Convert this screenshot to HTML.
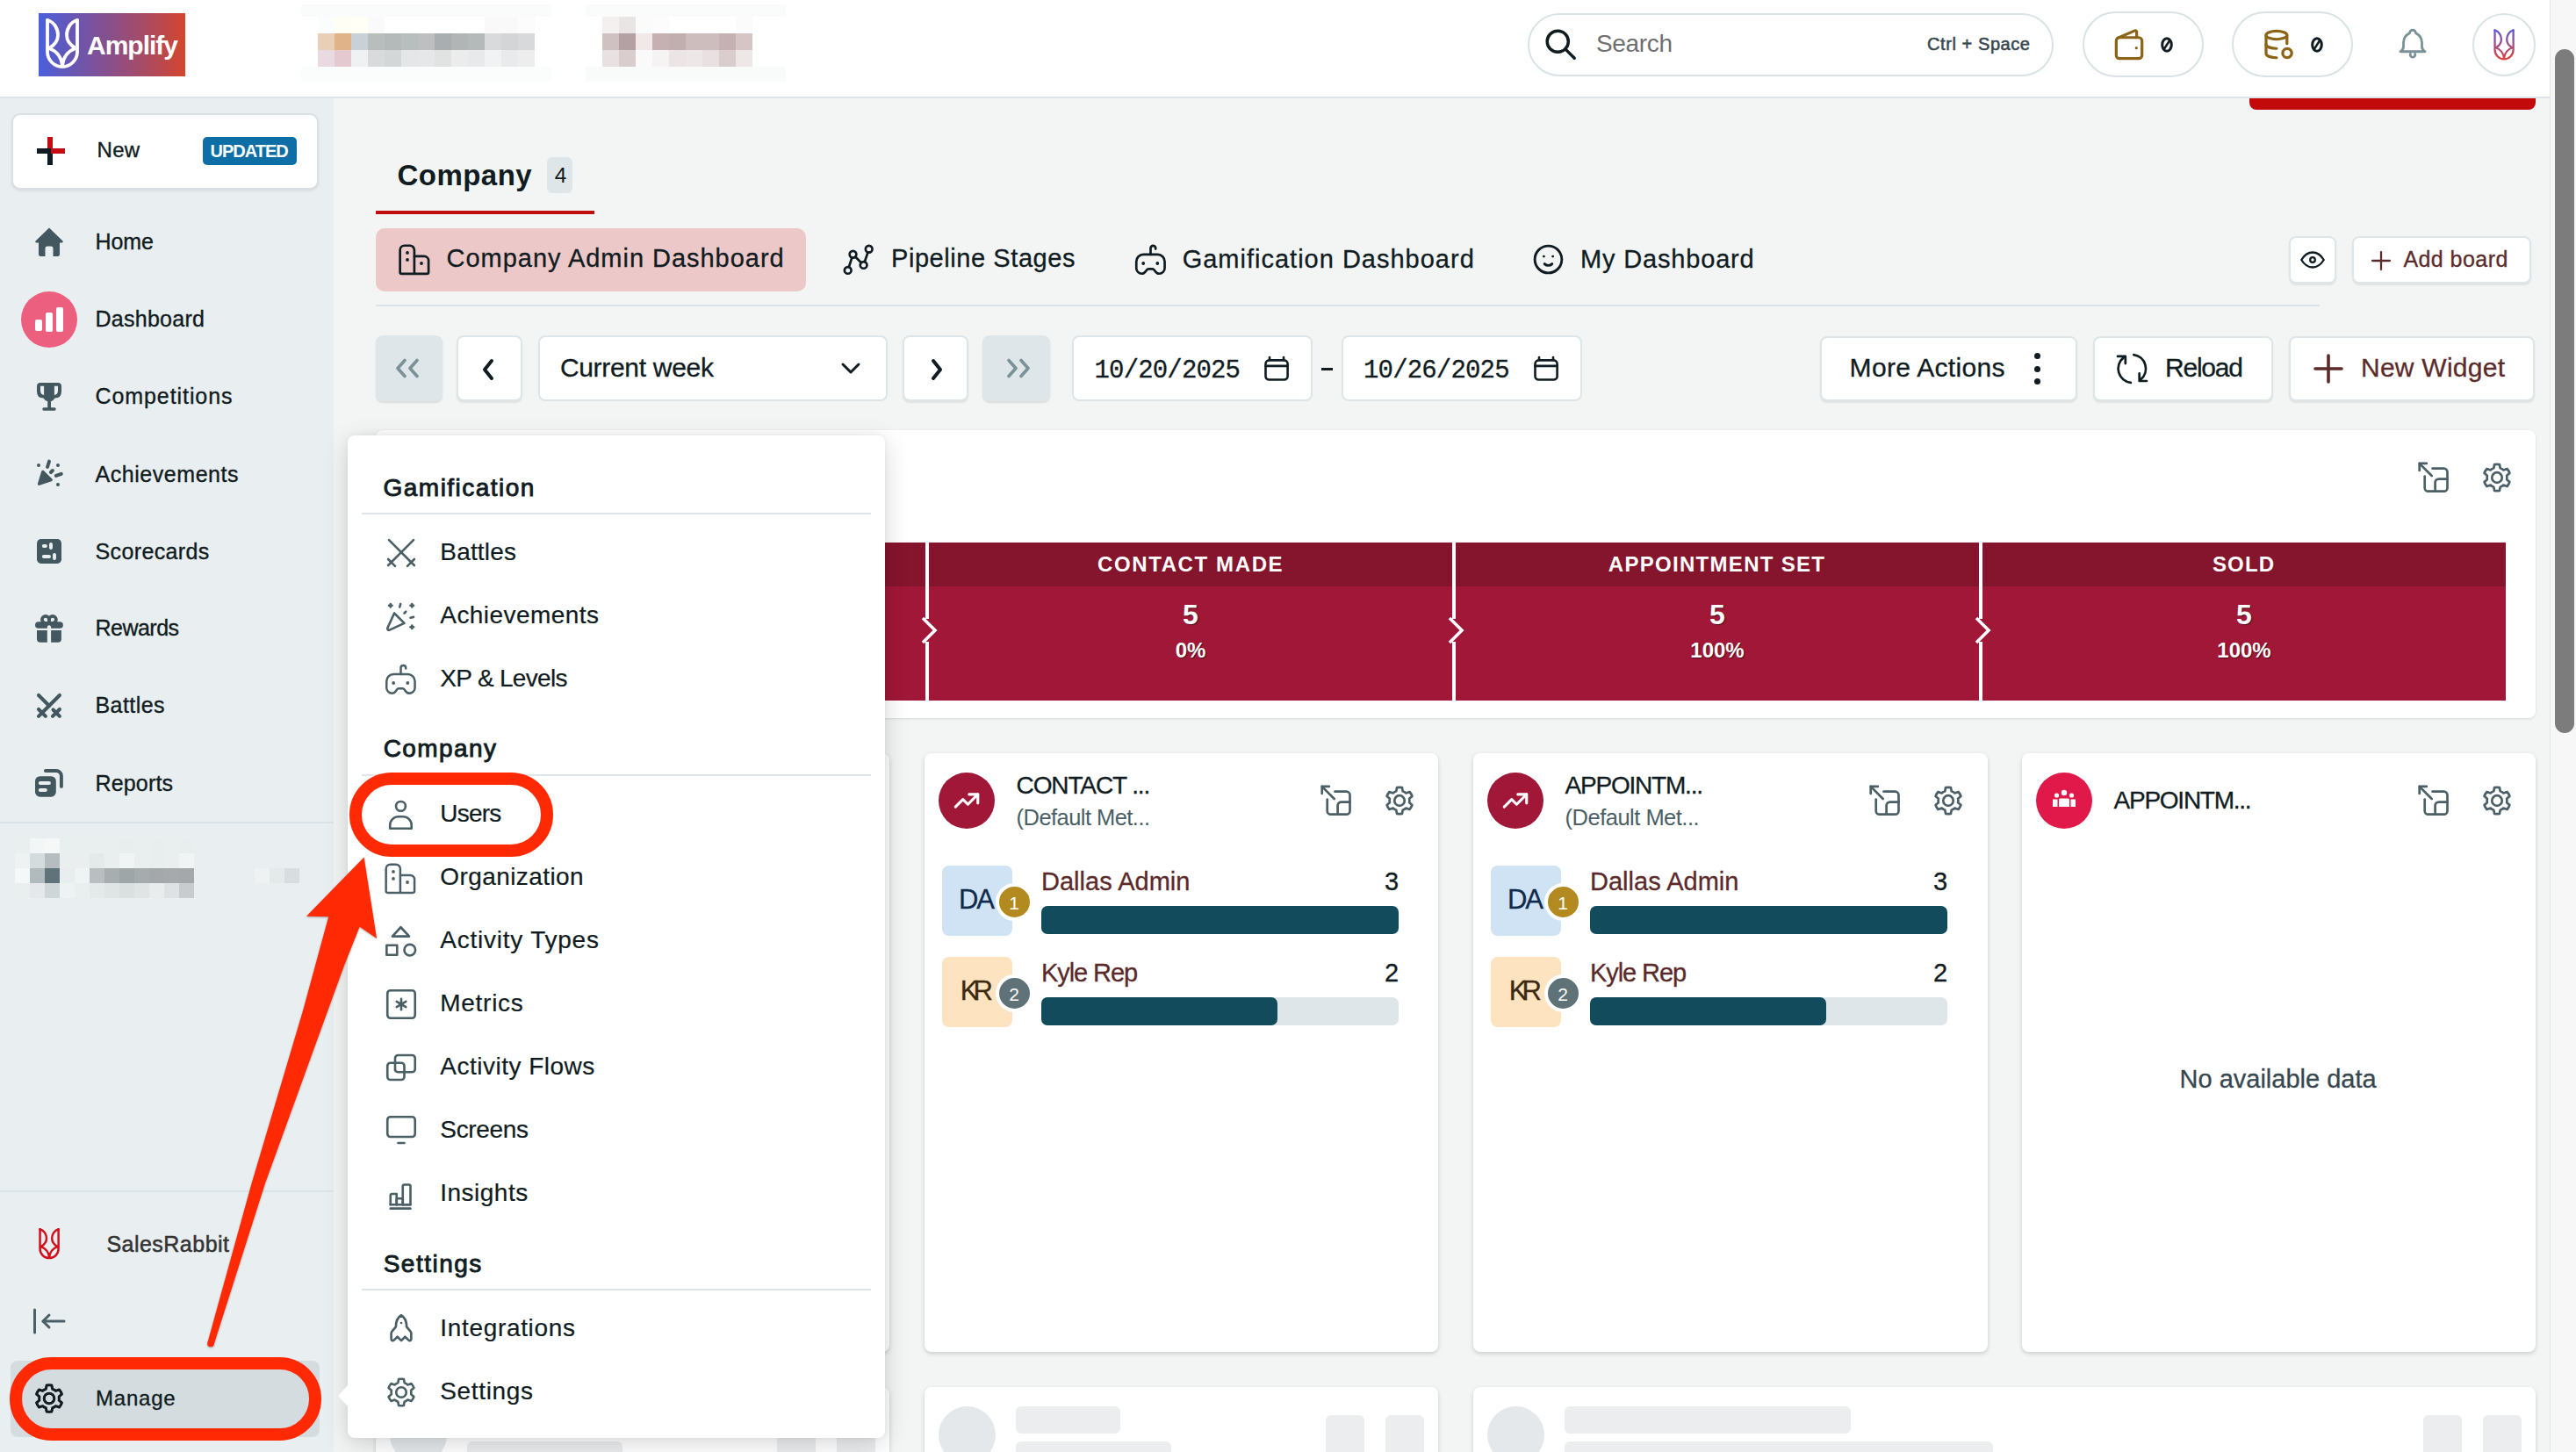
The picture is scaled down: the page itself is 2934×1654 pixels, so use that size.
<!DOCTYPE html><html><head><meta charset="utf-8"><style>
html,body{margin:0;padding:0;width:2934px;height:1654px;overflow:hidden;background:#f3f5f5;font-family:"Liberation Sans",sans-serif;}
.t{position:absolute;line-height:1;white-space:nowrap;}
.r{position:absolute;box-sizing:border-box;}
</style></head><body>
<div class="r" style="left:0px;top:0px;width:2904px;height:110px;background:#fff"></div>
<div class="r" style="left:0px;top:110px;width:2904px;height:2px;background:#dde5e8"></div>
<div class="r" style="left:44px;top:15px;width:167px;height:72px;background:linear-gradient(90deg,#4a5fdc 0%,#6a56b0 25%,#8a4f88 50%,#b04a5a 78%,#d4452c 100%)"></div>
<svg class="r" style="left:51px;top:20px;" width="40" height="62" viewBox="0 0 40 62"><g fill="none" stroke="#fff" stroke-width="3.8" stroke-linecap="round" stroke-linejoin="round" transform="translate(1,1)"><path d="M2 2 V38 A17 17 0 0 0 36 38 V2"/><path d="M2 2 C10 4 14 12 14 19 C14 26 9 31 4 34"/><path d="M36 2 C28 4 24 12 24 19 C24 26 29 31 34 34"/><path d="M4 34 C12 37 18 44 19 54"/><path d="M34 34 C26 37 20 44 19 54"/></g></svg>
<div class="t" style="left:99.0px;top:37.3px;font-size:30px;color:#fff;font-weight:700;letter-spacing:-1.00px;">Amplify</div>
<div class="r" style="left:362px;top:19px;width:19px;height:19px;background:#fbfcfc"></div>
<div class="r" style="left:381px;top:19px;width:19px;height:19px;background:#fffef5"></div>
<div class="r" style="left:400px;top:19px;width:19px;height:19px;background:#fffff5"></div>
<div class="r" style="left:419px;top:19px;width:19px;height:19px;background:#fafafa"></div>
<div class="r" style="left:438px;top:19px;width:19px;height:19px;background:#ffffff"></div>
<div class="r" style="left:457px;top:19px;width:19px;height:19px;background:#ffffff"></div>
<div class="r" style="left:476px;top:19px;width:19px;height:19px;background:#ffffff"></div>
<div class="r" style="left:495px;top:19px;width:19px;height:19px;background:#ffffff"></div>
<div class="r" style="left:514px;top:19px;width:19px;height:19px;background:#ffffff"></div>
<div class="r" style="left:533px;top:19px;width:19px;height:19px;background:#ffffff"></div>
<div class="r" style="left:552px;top:19px;width:19px;height:19px;background:#f8f9f8"></div>
<div class="r" style="left:571px;top:19px;width:19px;height:19px;background:#f9f9f9"></div>
<div class="r" style="left:590px;top:19px;width:19px;height:19px;background:#fcfcfc"></div>
<div class="r" style="left:362px;top:38px;width:19px;height:19px;background:#e8d0b8"></div>
<div class="r" style="left:381px;top:38px;width:19px;height:19px;background:#e0b488"></div>
<div class="r" style="left:400px;top:38px;width:19px;height:19px;background:#c8d0d8"></div>
<div class="r" style="left:419px;top:38px;width:19px;height:19px;background:#b9bdbc"></div>
<div class="r" style="left:438px;top:38px;width:19px;height:19px;background:#b4b9b9"></div>
<div class="r" style="left:457px;top:38px;width:19px;height:19px;background:#b8bdbe"></div>
<div class="r" style="left:476px;top:38px;width:19px;height:19px;background:#bdbfc1"></div>
<div class="r" style="left:495px;top:38px;width:19px;height:19px;background:#a9afb0"></div>
<div class="r" style="left:514px;top:38px;width:19px;height:19px;background:#b1b5b6"></div>
<div class="r" style="left:533px;top:38px;width:19px;height:19px;background:#b4b9ba"></div>
<div class="r" style="left:552px;top:38px;width:19px;height:19px;background:#d9dadb"></div>
<div class="r" style="left:571px;top:38px;width:19px;height:19px;background:#d3d5d7"></div>
<div class="r" style="left:590px;top:38px;width:19px;height:19px;background:#d8d9da"></div>
<div class="r" style="left:362px;top:57px;width:19px;height:19px;background:#e9d9e1"></div>
<div class="r" style="left:381px;top:57px;width:19px;height:19px;background:#e5c9d1"></div>
<div class="r" style="left:400px;top:57px;width:19px;height:19px;background:#f0f1f3"></div>
<div class="r" style="left:419px;top:57px;width:19px;height:19px;background:#d8dadc"></div>
<div class="r" style="left:438px;top:57px;width:19px;height:19px;background:#d4d7d8"></div>
<div class="r" style="left:457px;top:57px;width:19px;height:19px;background:#e4e6e8"></div>
<div class="r" style="left:476px;top:57px;width:19px;height:19px;background:#e5e7e8"></div>
<div class="r" style="left:495px;top:57px;width:19px;height:19px;background:#e0e3e1"></div>
<div class="r" style="left:514px;top:57px;width:19px;height:19px;background:#ececec"></div>
<div class="r" style="left:533px;top:57px;width:19px;height:19px;background:#e8e9ea"></div>
<div class="r" style="left:552px;top:57px;width:19px;height:19px;background:#f2f2f2"></div>
<div class="r" style="left:571px;top:57px;width:19px;height:19px;background:#e9eaeb"></div>
<div class="r" style="left:590px;top:57px;width:19px;height:19px;background:#ededed"></div>
<div class="r" style="left:686px;top:19px;width:19px;height:19px;background:#f4f0f0"></div>
<div class="r" style="left:705px;top:19px;width:19px;height:19px;background:#e9e5e5"></div>
<div class="r" style="left:724px;top:19px;width:19px;height:19px;background:#fbfbfb"></div>
<div class="r" style="left:743px;top:19px;width:19px;height:19px;background:#fcfcfc"></div>
<div class="r" style="left:762px;top:19px;width:19px;height:19px;background:#ffffff"></div>
<div class="r" style="left:781px;top:19px;width:19px;height:19px;background:#ffffff"></div>
<div class="r" style="left:800px;top:19px;width:19px;height:19px;background:#ffffff"></div>
<div class="r" style="left:819px;top:19px;width:19px;height:19px;background:#ffffff"></div>
<div class="r" style="left:838px;top:19px;width:19px;height:19px;background:#fbfbfb"></div>
<div class="r" style="left:343px;top:5px;width:285px;height:14px;background:#fafbfb"></div>
<div class="r" style="left:343px;top:76px;width:285px;height:17px;background:#fbfcfc"></div>
<div class="r" style="left:667px;top:5px;width:228px;height:14px;background:#fafbfb"></div>
<div class="r" style="left:667px;top:76px;width:228px;height:17px;background:#f9fafa"></div>
<div class="r" style="left:686px;top:38px;width:19px;height:19px;background:#cfc1c1"></div>
<div class="r" style="left:705px;top:38px;width:19px;height:19px;background:#b4a1a3"></div>
<div class="r" style="left:724px;top:38px;width:19px;height:19px;background:#f1e9e9"></div>
<div class="r" style="left:743px;top:38px;width:19px;height:19px;background:#c5b1b1"></div>
<div class="r" style="left:762px;top:38px;width:19px;height:19px;background:#c1afaf"></div>
<div class="r" style="left:781px;top:38px;width:19px;height:19px;background:#cdbdbd"></div>
<div class="r" style="left:800px;top:38px;width:19px;height:19px;background:#cdbdbd"></div>
<div class="r" style="left:819px;top:38px;width:19px;height:19px;background:#c5b1b3"></div>
<div class="r" style="left:838px;top:38px;width:19px;height:19px;background:#d5c5c5"></div>
<div class="r" style="left:686px;top:57px;width:19px;height:19px;background:#e9e1e1"></div>
<div class="r" style="left:705px;top:57px;width:19px;height:19px;background:#d9cdcd"></div>
<div class="r" style="left:724px;top:57px;width:19px;height:19px;background:#fafafa"></div>
<div class="r" style="left:743px;top:57px;width:19px;height:19px;background:#f5f3f3"></div>
<div class="r" style="left:762px;top:57px;width:19px;height:19px;background:#ede5e5"></div>
<div class="r" style="left:781px;top:57px;width:19px;height:19px;background:#ede7e7"></div>
<div class="r" style="left:800px;top:57px;width:19px;height:19px;background:#e9e1e1"></div>
<div class="r" style="left:819px;top:57px;width:19px;height:19px;background:#d9cdcd"></div>
<div class="r" style="left:838px;top:57px;width:19px;height:19px;background:#ede7e7"></div>
<div class="r" style="left:1740px;top:15px;width:599px;height:72px;background:#fff;border:2px solid #d9e3e6;border-radius:36px"></div>
<svg class="r" style="left:1756.5px;top:30.2px" width="41.4" height="41.4" viewBox="0 0 24 24" fill="none" stroke="#101c21" stroke-width="2" stroke-linecap="round" stroke-linejoin="round"><path d="M3 10a7 7 0 1 0 14 0a7 7 0 1 0 -14 0"/><path d="M21 21l-6 -6"/></svg>
<div class="t" style="left:1818.0px;top:36.2px;font-size:28px;color:#6f6f6f;letter-spacing:-0.35px;">Search</div>
<div class="t" style="left:2195.0px;top:40.0px;font-size:20px;color:#37474f;letter-spacing:0.58px;-webkit-text-stroke:0.55px #37474f;">Ctrl + Space</div>
<div class="r" style="left:2372px;top:13px;width:138px;height:75px;background:#fff;border:2px solid #d9e3e6;border-radius:38px"></div>
<svg class="r" style="left:2403px;top:28.5px" width="44" height="44" viewBox="0 0 24 24" fill="none" stroke="#8b6417" stroke-width="1.75" stroke-linecap="round" stroke-linejoin="round"><path d="M4 9.5a2 2 0 0 1 2 -2h12a2 2 0 0 1 2 2v9a2 2 0 0 1 -2 2h-12a2 2 0 0 1 -2 -2z"/><path d="M5 7.8l10.6 -4.6a0.8 0.8 0 0 1 1.1 .7v3.6"/><path d="M16.5 14l.01 0"/></svg>
<svg class="r" style="left:2461px;top:42px;" width="14" height="18" viewBox="0 0 14 18"><g fill="none" stroke="#101c21" stroke-width="3"><ellipse cx="7" cy="9" rx="5.3" ry="7.3"/><path d="M3.5 14.5 L10.5 3.5" stroke-width="2.4"/></g></svg>
<div class="r" style="left:2542px;top:13px;width:138px;height:75px;background:#fff;border:2px solid #d9e3e6;border-radius:38px"></div>
<svg class="r" style="left:2574px;top:29px" width="42" height="42" viewBox="0 0 24 24" fill="none" stroke="#8b6417" stroke-width="1.85" stroke-linecap="round" stroke-linejoin="round"><path d="M4 6.3a6.8 2.7 0 1 0 13.6 0a6.8 2.7 0 1 0 -13.6 0"/><path d="M4 6.3v12c0 1.5 3 2.7 6.8 2.7"/><path d="M4 12.3c0 1.5 3 2.7 6.8 2.7"/><path d="M17.6 6.3v5.5"/><path d="M14.8 18a2.95 2.95 0 1 0 5.9 0a2.95 2.95 0 1 0 -5.9 0"/></svg>
<svg class="r" style="left:2632px;top:42px;" width="14" height="18" viewBox="0 0 14 18"><g fill="none" stroke="#101c21" stroke-width="3"><ellipse cx="7" cy="9" rx="5.3" ry="7.3"/><path d="M3.5 14.5 L10.5 3.5" stroke-width="2.4"/></g></svg>
<svg class="r" style="left:2727px;top:29px" width="42" height="42" viewBox="0 0 24 24" fill="none" stroke="#7b9198" stroke-width="1.6" stroke-linecap="round" stroke-linejoin="round"><path d="M10 5a2 2 0 1 1 4 0a7 7 0 0 1 4 6v3a4 4 0 0 0 2 3h-16a4 4 0 0 0 2 -3v-3a7 7 0 0 1 4 -6"/><path d="M10.5 18.5a1.6 1.6 0 1 0 3 0"/></svg>
<div class="r" style="left:2816px;top:15px;width:72px;height:72px;background:#fff;border:2px solid #d9e3e6;border-radius:50%"></div>
<svg class="r" style="left:2839px;top:32px;" width="26" height="38" viewBox="0 0 26 38"><defs><linearGradient id="rg" gradientUnits="userSpaceOnUse" x1="0" y1="0" x2="0" y2="56"><stop offset="0" stop-color="#5b5bd6"/><stop offset="1" stop-color="#e0423a"/></linearGradient></defs><g fill="none" stroke="url(#rg)" stroke-width="3.7" stroke-linecap="round" stroke-linejoin="round" transform="translate(1.3,1.2) scale(0.62)"><path d="M2 2 V38 A17 17 0 0 0 36 38 V2"/><path d="M2 2 C10 4 14 12 14 19 C14 26 9 31 4 34"/><path d="M36 2 C28 4 24 12 24 19 C24 26 29 31 34 34"/><path d="M4 34 C12 37 18 44 19 54"/><path d="M34 34 C26 37 20 44 19 54"/></g></svg>
<div class="r" style="left:2904px;top:0px;width:30px;height:1654px;background:#f7f7f7;border-left:1px solid #e4e4e4"></div>
<div class="r" style="left:2910px;top:56px;width:22px;height:779px;background:#7b7c7b;border-radius:11px"></div>
<div class="r" style="left:2562px;top:112px;width:326px;height:13px;background:#c20a0a;border-radius:0 0 8px 8px"></div>
<div class="r" style="left:0px;top:112px;width:380px;height:1542px;background:#e9eef0"></div>
<div class="r" style="left:13px;top:129px;width:350px;height:87px;background:#fff;border:2px solid #d8e0e3;border-radius:10px;box-shadow:0 2px 3px rgba(0,0,0,.07)"></div>
<div class="r" style="left:54px;top:156px;width:6px;height:16px;background:#c40d12"></div>
<div class="r" style="left:54px;top:172px;width:6px;height:16px;background:#101c21"></div>
<div class="r" style="left:42px;top:169px;width:16px;height:6px;background:#101c21"></div>
<div class="r" style="left:58px;top:169px;width:16px;height:6px;background:#c40d12"></div>
<div class="t" style="left:110.6px;top:159.4px;font-size:24px;color:#101c21;letter-spacing:0.20px;-webkit-text-stroke:0.35px #101c21;">New</div>
<div class="r" style="left:231px;top:156px;width:107px;height:32px;background:#0e6fa6;border-radius:5px"></div>
<div class="t" style="left:239.5px;top:162.4px;font-size:20px;color:#fff;font-weight:700;letter-spacing:-1.00px;">UPDATED</div>
<div class="t" style="left:108.5px;top:262.8px;font-size:25px;color:#101c21;letter-spacing:-0.06px;-webkit-text-stroke:0.35px #101c21;">Home</div>
<div class="t" style="left:108.5px;top:350.8px;font-size:25px;color:#101c21;letter-spacing:0.27px;-webkit-text-stroke:0.35px #101c21;">Dashboard</div>
<div class="t" style="left:108.5px;top:439.2px;font-size:25px;color:#101c21;letter-spacing:0.92px;-webkit-text-stroke:0.35px #101c21;">Competitions</div>
<div class="t" style="left:108.5px;top:527.5px;font-size:25px;color:#101c21;letter-spacing:0.55px;-webkit-text-stroke:0.35px #101c21;">Achievements</div>
<div class="t" style="left:108.5px;top:615.8px;font-size:25px;color:#101c21;letter-spacing:0.37px;-webkit-text-stroke:0.35px #101c21;">Scorecards</div>
<div class="t" style="left:108.5px;top:702.8px;font-size:25px;color:#101c21;letter-spacing:-0.52px;-webkit-text-stroke:0.35px #101c21;">Rewards</div>
<div class="t" style="left:108.5px;top:791.2px;font-size:25px;color:#101c21;letter-spacing:0.44px;-webkit-text-stroke:0.35px #101c21;">Battles</div>
<div class="t" style="left:108.5px;top:879.8px;font-size:25px;color:#101c21;letter-spacing:0.16px;-webkit-text-stroke:0.35px #101c21;">Reports</div>
<div class="r" style="left:24px;top:332px;width:64px;height:64px;background:#ec5f7e;border-radius:50%"></div>
<div class="r" style="left:40px;top:363.6px;width:7.5px;height:13.899999999999977px;background:#fff;border-radius:2px"></div>
<div class="r" style="left:52px;top:355.5px;width:8px;height:22.0px;background:#fff;border-radius:2px"></div>
<div class="r" style="left:64px;top:350px;width:8px;height:27.5px;background:#fff;border-radius:2px"></div>
<svg class="r" style="left:40px;top:259px;" width="32" height="33" viewBox="0 0 32 33"><path fill="#43585e" d="M16 0.5 L31.5 15.5 Q32.3 17.2 30.5 17.5 L28 17.5 L28 30.5 Q28 33 25.5 33 L20.5 33 L20.5 24 Q20.5 21.5 18 21.5 L14 21.5 Q11.5 21.5 11.5 24 L11.5 33 L6.5 33 Q4 33 4 30.5 L4 17.5 L1.5 17.5 Q-0.3 17.2 0.5 15.5 Z"/></svg>
<svg class="r" style="left:34px;top:430px;" width="44" height="44" viewBox="0 0 44 44"><path fill="#43585e" fill-rule="evenodd" d="M12 6.1 H32 A4 4 0 0 1 36 10.1 V16 Q36 23.6 28.5 23.6 Q27 26.5 24 27.2 V34.2 H28 A1.75 1.75 0 0 1 28 37.7 H16 A1.75 1.75 0 0 1 16 34.2 H20.2 V27.2 Q17 26.5 15.5 23.6 Q8 23.6 8 16 V10.1 A4 4 0 0 1 12 6.1 Z M12 9.8 H16.1 V20 Q12 19.5 12 15 Z M32 9.8 H27.9 V20 Q32 19.5 32 15 Z"/></svg>
<svg class="r" style="left:34px;top:518px;" width="44" height="44" viewBox="0 0 44 44"><g fill="#43585e" stroke="#43585e" stroke-linecap="round" stroke-linejoin="round"><path d="M14.8 19.5 L24.2 28.6 L10.6 33.2 Z" stroke-width="3.4"/><circle cx="10" cy="12" r="2" stroke="none"/><circle cx="32" cy="12" r="2" stroke="none"/><circle cx="32" cy="33.9" r="2" stroke="none"/><path d="M22 7.6 L20 14" fill="none" stroke-width="3.9"/><path d="M25.9 18 L23.9 20" fill="none" stroke-width="3.9"/><path d="M29.8 23.9 L35.8 21.8" fill="none" stroke-width="3.9"/></g></svg>
<svg class="r" style="left:34px;top:606px;" width="44" height="44" viewBox="0 0 44 44"><rect x="8" y="8" width="28" height="28" rx="4.8" fill="#43585e"/><g stroke="#e9eef0" stroke-width="3.9" stroke-linecap="round"><path d="M15.8 16 H17.9"/><path d="M24 14 V18"/><path d="M15.8 28 H22"/><path d="M28 25.9 V30"/></g></svg>
<svg class="r" style="left:34px;top:694px;" width="44" height="44" viewBox="0 0 44 44"><g fill="#43585e"><path d="M9.8 14.2 H34.1 A3.8 3.8 0 0 1 34.1 21.8 H24.1 V20.4 A2.15 2.15 0 0 0 19.8 20.4 V21.8 H9.8 A3.8 3.8 0 0 1 9.8 14.2 Z"/><path d="M8 24.1 H19.8 V37.7 H12 A4 4 0 0 1 8 33.7 Z"/><path d="M24.1 24.1 H35.9 V33.7 A4 4 0 0 1 31.9 37.7 H24.1 Z"/></g><g fill="none" stroke="#43585e" stroke-width="3.7"><path d="M21.9 15 V11.8 A4 4 0 1 0 17.9 15.8 H21.9"/><path d="M21.9 15 V11.8 A4 4 0 1 1 25.9 15.8 H21.9"/></g></svg>
<svg class="r" style="left:34px;top:782px;" width="44" height="44" viewBox="0 0 44 44"><g stroke="#43585e" stroke-width="4.1" stroke-linecap="round" fill="none"><path d="M10 10 L22 22"/><path d="M33.9 10 L13.9 30"/><path d="M10 26 L17.9 33.9"/><path d="M10 33.9 L13.9 30"/><path d="M26.5 26.5 L33.9 33.9"/><path d="M33.9 26 L26 33.9"/></g></svg>
<svg class="r" style="left:34px;top:870px;" width="44" height="44" viewBox="0 0 44 44"><rect x="6" y="14.2" width="23.8" height="23.5" rx="5.5" fill="#43585e"/><g stroke="#e9eef0" stroke-width="4" stroke-linecap="round"><path d="M11.8 22 H21.9"/><path d="M11.8 30 H17.8"/></g><path d="M17.9 8 H29.8 A6 6 0 0 1 35.9 14 V25.9" fill="none" stroke="#43585e" stroke-width="3.9" stroke-linecap="round"/></svg>
<div class="r" style="left:0px;top:936px;width:380px;height:2px;background:#d9e3e8"></div>
<div class="r" style="left:17px;top:955px;width:17px;height:17px;background:#e9eeee"></div>
<div class="r" style="left:34px;top:955px;width:17px;height:17px;background:#f2f6f6"></div>
<div class="r" style="left:51px;top:955px;width:17px;height:17px;background:#f6f8f8"></div>
<div class="r" style="left:68px;top:955px;width:17px;height:17px;background:#e9eeee"></div>
<div class="r" style="left:85px;top:955px;width:17px;height:17px;background:#e9eeee"></div>
<div class="r" style="left:102px;top:955px;width:17px;height:17px;background:#e9efef"></div>
<div class="r" style="left:119px;top:955px;width:17px;height:17px;background:#e9efef"></div>
<div class="r" style="left:136px;top:955px;width:17px;height:17px;background:#e8eeee"></div>
<div class="r" style="left:153px;top:955px;width:17px;height:17px;background:#e9eeee"></div>
<div class="r" style="left:170px;top:955px;width:17px;height:17px;background:#e8eeee"></div>
<div class="r" style="left:187px;top:955px;width:17px;height:17px;background:#e9eeee"></div>
<div class="r" style="left:204px;top:955px;width:17px;height:17px;background:#e8eeee"></div>
<div class="r" style="left:17px;top:972px;width:17px;height:17px;background:#eef2f2"></div>
<div class="r" style="left:34px;top:972px;width:17px;height:17px;background:#d4dcde"></div>
<div class="r" style="left:51px;top:972px;width:17px;height:17px;background:#b5bdc0"></div>
<div class="r" style="left:68px;top:972px;width:17px;height:17px;background:#eaeeee"></div>
<div class="r" style="left:85px;top:972px;width:17px;height:17px;background:#eaeeee"></div>
<div class="r" style="left:102px;top:972px;width:17px;height:17px;background:#e4eaea"></div>
<div class="r" style="left:119px;top:972px;width:17px;height:17px;background:#eaeeee"></div>
<div class="r" style="left:136px;top:972px;width:17px;height:17px;background:#f0f4f4"></div>
<div class="r" style="left:153px;top:972px;width:17px;height:17px;background:#eaeeee"></div>
<div class="r" style="left:170px;top:972px;width:17px;height:17px;background:#e8eeee"></div>
<div class="r" style="left:187px;top:972px;width:17px;height:17px;background:#eaeeee"></div>
<div class="r" style="left:204px;top:972px;width:17px;height:17px;background:#f0f4f4"></div>
<div class="r" style="left:17px;top:989px;width:17px;height:17px;background:#f4f8f8"></div>
<div class="r" style="left:34px;top:989px;width:17px;height:17px;background:#b1bbbe"></div>
<div class="r" style="left:51px;top:989px;width:17px;height:17px;background:#5f7378"></div>
<div class="r" style="left:68px;top:989px;width:17px;height:17px;background:#e8eeee"></div>
<div class="r" style="left:85px;top:989px;width:17px;height:17px;background:#eef4f4"></div>
<div class="r" style="left:102px;top:989px;width:17px;height:17px;background:#babec0"></div>
<div class="r" style="left:119px;top:989px;width:17px;height:17px;background:#a8aeb0"></div>
<div class="r" style="left:136px;top:989px;width:17px;height:17px;background:#9fa6a8"></div>
<div class="r" style="left:153px;top:989px;width:17px;height:17px;background:#a6acae"></div>
<div class="r" style="left:170px;top:989px;width:17px;height:17px;background:#a4a8aa"></div>
<div class="r" style="left:187px;top:989px;width:17px;height:17px;background:#a6aaac"></div>
<div class="r" style="left:204px;top:989px;width:17px;height:17px;background:#a4a8aa"></div>
<div class="r" style="left:17px;top:1006px;width:17px;height:17px;background:#e9eeee"></div>
<div class="r" style="left:34px;top:1006px;width:17px;height:17px;background:#e4e8ea"></div>
<div class="r" style="left:51px;top:1006px;width:17px;height:17px;background:#cfd6d8"></div>
<div class="r" style="left:68px;top:1006px;width:17px;height:17px;background:#eef2f2"></div>
<div class="r" style="left:85px;top:1006px;width:17px;height:17px;background:#e9eeee"></div>
<div class="r" style="left:102px;top:1006px;width:17px;height:17px;background:#e4eaea"></div>
<div class="r" style="left:119px;top:1006px;width:17px;height:17px;background:#dfe4e4"></div>
<div class="r" style="left:136px;top:1006px;width:17px;height:17px;background:#dadfe0"></div>
<div class="r" style="left:153px;top:1006px;width:17px;height:17px;background:#e0e4e4"></div>
<div class="r" style="left:170px;top:1006px;width:17px;height:17px;background:#e8ecec"></div>
<div class="r" style="left:187px;top:1006px;width:17px;height:17px;background:#dee2e2"></div>
<div class="r" style="left:204px;top:1006px;width:17px;height:17px;background:#c8ccce"></div>
<div class="r" style="left:290px;top:989px;width:17px;height:17px;background:#eef2f2"></div>
<div class="r" style="left:307px;top:989px;width:17px;height:17px;background:#e4eaea"></div>
<div class="r" style="left:324px;top:989px;width:17px;height:17px;background:#d8dee0"></div>
<div class="r" style="left:0px;top:1356px;width:380px;height:2px;background:#d9e3e8"></div>
<svg class="r" style="left:43px;top:1398px;" width="26" height="39" viewBox="0 0 26 39"><g fill="none" stroke="#d0101b" stroke-width="4" stroke-linecap="round" stroke-linejoin="round" transform="translate(1.3,1) scale(0.62)"><path d="M2 2 V38 A17 17 0 0 0 36 38 V2"/><path d="M2 2 C10 4 14 12 14 19 C14 26 9 31 4 34"/><path d="M36 2 C28 4 24 12 24 19 C24 26 29 31 34 34"/><path d="M4 34 C12 37 18 44 19 54"/><path d="M34 34 C26 37 20 44 19 54"/></g></svg>
<div class="t" style="left:121.4px;top:1404.8px;font-size:25px;color:#333;letter-spacing:0.48px;-webkit-text-stroke:0.5px #333;">SalesRabbit</div>
<svg class="r" style="left:37px;top:1490px;" width="40" height="30" viewBox="0 0 40 30"><g stroke="#4b5f66" stroke-width="3" stroke-linecap="round" stroke-linejoin="round" fill="none"><path d="M2.5 2 V28"/><path d="M12 15 H36"/><path d="M19 8 L12 15 L19 22"/></g></svg>
<div class="r" style="left:12px;top:1550px;width:352px;height:87px;background:#d5dcdf;border-radius:8px"></div>
<svg class="r" style="left:35px;top:1572px" width="42" height="42" viewBox="0 0 24 24" fill="none" stroke="#101c21" stroke-width="1.75" stroke-linecap="round" stroke-linejoin="round"><path d="M10.34 3.46A8.7 8.7 0 0 1 13.66 3.46L14.12 5.85A6.5 6.5 0 0 1 16.26 7.09L18.57 6.29A8.7 8.7 0 0 1 20.23 9.17L18.38 10.76A6.5 6.5 0 0 1 18.38 13.24L20.23 14.83A8.7 8.7 0 0 1 18.57 17.71L16.26 16.91A6.5 6.5 0 0 1 14.12 18.15L13.66 20.54A8.7 8.7 0 0 1 10.34 20.54L9.88 18.15A6.5 6.5 0 0 1 7.74 16.91L5.43 17.71A8.7 8.7 0 0 1 3.77 14.83L5.62 13.24A6.5 6.5 0 0 1 5.62 10.76L3.77 9.17A8.7 8.7 0 0 1 5.43 6.29L7.74 7.09A6.5 6.5 0 0 1 9.88 5.85Z"/><path d="M12 12m-3.3 0a3.3 3.3 0 1 0 6.6 0a3.3 3.3 0 1 0 -6.6 0"/></svg>
<div class="t" style="left:109.0px;top:1580.6px;font-size:24px;color:#101c21;letter-spacing:0.78px;-webkit-text-stroke:0.35px #101c21;">Manage</div>
<div class="t" style="left:452.5px;top:182.9px;font-size:33px;color:#101c21;font-weight:700;letter-spacing:0.47px;">Company</div>
<div class="r" style="left:623px;top:179px;width:29px;height:41px;background:#dfe6ea;border-radius:6px"></div>
<div class="t" style="left:631.8px;top:187.8px;font-size:24.5px;color:#101c21;">4</div>
<div class="r" style="left:428px;top:240px;width:249px;height:4px;background:#c00d0d"></div>
<div class="r" style="left:428px;top:260px;width:490px;height:72px;background:#ecc8c8;border-radius:10px"></div>
<svg class="r" style="left:445px;top:270px;" width="55" height="50" viewBox="0 0 55 50"><g fill="none" stroke="#101c21" stroke-width="2.7" stroke-linejoin="round"><path d="M12.5 41.9 H41.2 A1.9 1.9 0 0 0 43.1 40 V26.9 A5 5 0 0 0 38.1 21.9 H26.9 V14.75 A5 5 0 0 0 21.9 9.75 H15.65 A5 5 0 0 0 10.65 14.75 V40 A1.9 1.9 0 0 0 12.5 41.9 Z"/><path d="M26.9 21.9 V41.9"/></g><g fill="#101c21"><circle cx="19" cy="17.9" r="1.9"/><circle cx="19" cy="25.9" r="1.9"/><circle cx="35" cy="30" r="1.9"/></g></svg>
<div class="t" style="left:508.6px;top:280.4px;font-size:29px;color:#101c21;letter-spacing:0.97px;-webkit-text-stroke:0.3px #101c21;">Company Admin Dashboard</div>
<svg class="r" style="left:950px;top:270px;" width="55" height="50" viewBox="0 0 55 50"><g fill="none" stroke="#101c21" stroke-width="2.7" stroke-linecap="round"><circle cx="15.7" cy="37.9" r="3.85"/><circle cx="21.5" cy="19.8" r="3.85"/><circle cx="33.6" cy="31.9" r="3.85"/><circle cx="39.7" cy="13.8" r="3.85"/><path d="M16.87 34.23 L20.33 23.47 M24.22 22.52 L30.88 29.18 M34.83 28.25 L38.47 17.45"/></g></svg>
<div class="t" style="left:1015.0px;top:280.2px;font-size:29px;color:#101c21;letter-spacing:0.57px;-webkit-text-stroke:0.3px #101c21;">Pipeline Stages</div>
<svg class="r" style="left:1285px;top:270px;" width="55" height="50" viewBox="0 0 55 50"><g fill="none" stroke="#101c21" stroke-width="2.7" stroke-linecap="round" stroke-linejoin="round"><path d="M17.25 19.95 H33.55 A8 8 0 0 1 41.55 27.95 V35.5 A6.25 6.25 0 0 1 35.3 41.75 C33 41.75 31.7 40.5 30.5 38.7 L29.6 37.4 A2.5 2.5 0 0 0 27.5 36.3 H23.2 A2.5 2.5 0 0 0 21.1 37.4 L20.2 38.7 C19 40.5 17.7 41.75 15.5 41.75 A6.25 6.25 0 0 1 9.25 35.5 V27.95 A8 8 0 0 1 17.25 19.95 Z"/><path d="M25.5 19.95 V12.8 A2.85 2.85 0 0 1 31.2 12.8 V13.6"/></g><g fill="#101c21"><circle cx="17.2" cy="30" r="1.9"/><circle cx="33.3" cy="30" r="1.9"/></g></svg>
<div class="t" style="left:1346.7px;top:280.7px;font-size:29px;color:#101c21;letter-spacing:1.00px;-webkit-text-stroke:0.3px #101c21;">Gamification Dashboard</div>
<svg class="r" style="left:1743px;top:275px" width="41" height="41" viewBox="0 0 24 24" fill="none" stroke="#101c21" stroke-width="1.7" stroke-linecap="round" stroke-linejoin="round"><path d="M12 12m-9 0a9 9 0 1 0 18 0a9 9 0 1 0 -18 0"/><path d="M9 10l.01 0"/><path d="M15 10l.01 0"/><path d="M9.5 15a3.5 3.5 0 0 0 5 0"/></svg>
<div class="t" style="left:1800.0px;top:280.7px;font-size:29px;color:#101c21;letter-spacing:0.83px;-webkit-text-stroke:0.3px #101c21;">My Dashboard</div>
<div class="r" style="left:2607px;top:269px;width:54px;height:54px;background:#fff;border:2px solid #dde5e8;border-radius:8px;box-shadow:0 2px 2px rgba(0,0,0,.08)"></div>
<svg class="r" style="left:2617px;top:279px" width="34" height="34" viewBox="0 0 24 24" fill="none" stroke="#101c21" stroke-width="1.6" stroke-linecap="round" stroke-linejoin="round"><path d="M10 12a2 2 0 1 0 4 0a2 2 0 0 0 -4 0"/><path d="M21 12c-2.4 4 -5.4 6 -9 6c-3.6 0 -6.6 -2 -9 -6c2.4 -4 5.4 -6 9 -6c3.6 0 6.6 2 9 6"/></svg>
<div class="r" style="left:2679px;top:269px;width:204px;height:54px;background:#fff;border:2px solid #dde5e8;border-radius:8px;box-shadow:0 2px 2px rgba(0,0,0,.08)"></div>
<svg class="r" style="left:2694.5px;top:279.5px" width="34" height="34" viewBox="0 0 24 24" fill="none" stroke="#5b2b2b" stroke-width="1.6" stroke-linecap="round" stroke-linejoin="round"><path d="M12 5l0 14"/><path d="M5 12l14 0"/></svg>
<div class="t" style="left:2737.4px;top:282.9px;font-size:25px;color:#5b2b2b;letter-spacing:0.45px;-webkit-text-stroke:0.3px #5b2b2b;">Add board</div>
<div class="r" style="left:428px;top:347px;width:2214px;height:2px;background:#dce4e8"></div>
<div class="r" style="left:428px;top:382px;width:76px;height:75px;background:#dfe6e9;border-radius:8px;box-shadow:0 2px 2px rgba(0,0,0,.1)"></div>
<svg class="r" style="left:449px;top:408px;" width="32" height="24" viewBox="0 0 32 24"><g fill="none" stroke="#7b9198" stroke-width="3.6" stroke-linecap="round" stroke-linejoin="round"><path d="M12 2.5 L4 11.5 L12 20.5"/><path d="M26 2.5 L18 11.5 L26 20.5"/></g></svg>
<div class="r" style="left:520px;top:382px;width:75px;height:75px;background:#fff;border:2px solid #dde5e8;border-radius:8px;box-shadow:0 2px 2px rgba(0,0,0,.08)"></div>
<svg class="r" style="left:546px;top:408px;" width="20" height="26" viewBox="0 0 20 26"><path d="M14 3 L6 13 L14 23" fill="none" stroke="#101c21" stroke-width="4" stroke-linecap="round" stroke-linejoin="round"/></svg>
<div class="r" style="left:613px;top:382px;width:398px;height:75px;background:#fff;border:2px solid #dde5e8;border-radius:8px"></div>
<div class="t" style="left:637.9px;top:403.8px;font-size:30px;color:#101c21;letter-spacing:-0.31px;-webkit-text-stroke:0.3px #101c21;">Current week</div>
<svg class="r" style="left:957px;top:411px;" width="24" height="18" viewBox="0 0 24 18"><path d="M3 4 L12 13 L21 4" fill="none" stroke="#101c21" stroke-width="3" stroke-linecap="round" stroke-linejoin="round"/></svg>
<div class="r" style="left:1028px;top:382px;width:75px;height:75px;background:#fff;border:2px solid #dde5e8;border-radius:8px;box-shadow:0 2px 2px rgba(0,0,0,.08)"></div>
<svg class="r" style="left:1057px;top:408px;" width="20" height="26" viewBox="0 0 20 26"><path d="M6 3 L14 13 L6 23" fill="none" stroke="#101c21" stroke-width="4" stroke-linecap="round" stroke-linejoin="round"/></svg>
<div class="r" style="left:1119px;top:382px;width:77px;height:75px;background:#dfe6e9;border-radius:8px;box-shadow:0 2px 2px rgba(0,0,0,.1)"></div>
<svg class="r" style="left:1143px;top:408px;" width="32" height="24" viewBox="0 0 32 24"><g fill="none" stroke="#7b9198" stroke-width="3.6" stroke-linecap="round" stroke-linejoin="round"><path d="M6 2.5 L14 11.5 L6 20.5"/><path d="M20 2.5 L28 11.5 L20 20.5"/></g></svg>
<div class="r" style="left:1221px;top:382px;width:274px;height:75px;background:#fff;border:2px solid #dde5e8;border-radius:8px"></div>
<div class="t" style="left:1246.5px;top:407.7px;font-size:29px;color:#101c21;font-family:'Liberation Mono',monospace;letter-spacing:-0.84px;-webkit-text-stroke:0.3px #101c21;">10/20/2025</div>
<svg class="r" style="left:1425px;top:395px;" width="60" height="50" viewBox="0 0 60 50"><g fill="none" stroke="#101c21" stroke-width="2.6" stroke-linecap="round" stroke-linejoin="round"><path d="M20.5 15.4 H37.6 A4 4 0 0 1 41.6 19.4 V33.5 A4 4 0 0 1 37.6 37.5 H20.5 A4 4 0 0 1 16.5 33.5 V19.4 A4 4 0 0 1 20.5 15.4 Z"/><path d="M21 12 V15"/><path d="M37 12 V15"/><path d="M16.5 21.9 H41.6"/></g></svg>
<div class="r" style="left:1505px;top:419px;width:13px;height:3px;background:#101c21"></div>
<div class="r" style="left:1528px;top:382px;width:274px;height:75px;background:#fff;border:2px solid #dde5e8;border-radius:8px"></div>
<div class="t" style="left:1553.0px;top:407.7px;font-size:29px;color:#101c21;font-family:'Liberation Mono',monospace;letter-spacing:-0.83px;-webkit-text-stroke:0.3px #101c21;">10/26/2025</div>
<svg class="r" style="left:1731.6px;top:395px;" width="60" height="50" viewBox="0 0 60 50"><g fill="none" stroke="#101c21" stroke-width="2.6" stroke-linecap="round" stroke-linejoin="round"><path d="M20.5 15.4 H37.6 A4 4 0 0 1 41.6 19.4 V33.5 A4 4 0 0 1 37.6 37.5 H20.5 A4 4 0 0 1 16.5 33.5 V19.4 A4 4 0 0 1 20.5 15.4 Z"/><path d="M21 12 V15"/><path d="M37 12 V15"/><path d="M16.5 21.9 H41.6"/></g></svg>
<div class="r" style="left:2073px;top:383px;width:293px;height:74px;background:#fff;border:2px solid #dde5e8;border-radius:8px;box-shadow:0 2px 2px rgba(0,0,0,.08)"></div>
<div class="t" style="left:2106.6px;top:403.9px;font-size:30px;color:#101c21;letter-spacing:0.31px;-webkit-text-stroke:0.3px #101c21;">More Actions</div>
<div class="r" style="left:2316.5px;top:402.0px;width:7.0px;height:7.0px;background:#101c21;border-radius:50%"></div>
<div class="r" style="left:2316.5px;top:416.5px;width:7.0px;height:7.0px;background:#101c21;border-radius:50%"></div>
<div class="r" style="left:2316.5px;top:431.0px;width:7.0px;height:7.0px;background:#101c21;border-radius:50%"></div>
<div class="r" style="left:2384px;top:383px;width:205px;height:74px;background:#fff;border:2px solid #dde5e8;border-radius:8px;box-shadow:0 2px 2px rgba(0,0,0,.08)"></div>
<svg class="r" style="left:2400px;top:395px;" width="60" height="50" viewBox="0 0 60 50"><g fill="none" stroke="#101c21" stroke-width="2.7" stroke-linecap="round" stroke-linejoin="round"><path d="M26.9 40.8 A16 16 0 0 1 18.6 12.4"/><path d="M12 10.9 H20.8 V19.1"/><path d="M30.3 9.1 A16 16 0 0 1 38.3 37.2"/><path d="M36.7 30.3 V39 H45"/></g></svg>
<div class="t" style="left:2466.0px;top:403.9px;font-size:30px;color:#101c21;letter-spacing:-1.22px;-webkit-text-stroke:0.3px #101c21;">Reload</div>
<div class="r" style="left:2607px;top:383px;width:280px;height:74px;background:#fff;border:2px solid #dde5e8;border-radius:8px;box-shadow:0 2px 2px rgba(0,0,0,.08)"></div>
<svg class="r" style="left:2634px;top:403px;" width="36" height="34" viewBox="0 0 36 34"><g stroke="#5b2b2b" stroke-width="3.6" stroke-linecap="round"><path d="M18 2 V32"/><path d="M3 17 H33"/></g></svg>
<div class="t" style="left:2689.0px;top:403.9px;font-size:30px;color:#5b2b2b;letter-spacing:0.25px;-webkit-text-stroke:0.3px #5b2b2b;">New Widget</div>
<div class="r" style="left:428px;top:490px;width:2460px;height:328px;background:#fff;border-radius:8px;box-shadow:0 1px 3px rgba(0,0,0,.12)"></div>
<svg class="r" style="left:2745px;top:517px;" width="53" height="53" viewBox="0 0 53 53"><g fill="none" stroke="#4b5f66" stroke-width="2.7" stroke-linecap="round" stroke-linejoin="round"><path d="M10.7 18.9 V10.9 H18.9"/><path d="M10.7 10.9 L24.7 25"/><path d="M25.5 16.7 H38.5 A4 4 0 0 1 42.5 20.7 V38.7 A4 4 0 0 1 38.5 42.7 H20.7 A4 4 0 0 1 16.7 38.7 V25.5"/><path d="M28.6 42.7 V32.6 A4 4 0 0 1 32.6 28.6 H42.5"/></g></svg>
<svg class="r" style="left:2822.6px;top:522.8px" width="42" height="42" viewBox="0 0 24 24" fill="none" stroke="#4b5f66" stroke-width="1.55" stroke-linecap="round" stroke-linejoin="round"><path d="M10.34 3.46A8.7 8.7 0 0 1 13.66 3.46L14.12 5.85A6.5 6.5 0 0 1 16.26 7.09L18.57 6.29A8.7 8.7 0 0 1 20.23 9.17L18.38 10.76A6.5 6.5 0 0 1 18.38 13.24L20.23 14.83A8.7 8.7 0 0 1 18.57 17.71L16.26 16.91A6.5 6.5 0 0 1 14.12 18.15L13.66 20.54A8.7 8.7 0 0 1 10.34 20.54L9.88 18.15A6.5 6.5 0 0 1 7.74 16.91L5.43 17.71A8.7 8.7 0 0 1 3.77 14.83L5.62 13.24A6.5 6.5 0 0 1 5.62 10.76L3.77 9.17A8.7 8.7 0 0 1 5.43 6.29L7.74 7.09A6.5 6.5 0 0 1 9.88 5.85Z"/><path d="M12 12m-3.3 0a3.3 3.3 0 1 0 6.6 0a3.3 3.3 0 1 0 -6.6 0"/></svg>
<div class="r" style="left:455px;top:618px;width:2399px;height:50px;background:#85142d"></div>
<div class="r" style="left:455px;top:668px;width:2399px;height:130px;background:#a01738"></div>
<div class="r" style="left:1054px;top:618px;width:4px;height:87px;background:#fff"></div>
<div class="r" style="left:1054px;top:731px;width:4px;height:67px;background:#fff"></div>
<svg class="r" style="left:1048px;top:702px;" width="22" height="32" viewBox="0 0 22 32"><path d="M3 2 L17 16 L3 30" fill="none" stroke="#fff" stroke-width="3.6" stroke-linejoin="miter"/></svg>
<div class="r" style="left:1654px;top:618px;width:4px;height:87px;background:#fff"></div>
<div class="r" style="left:1654px;top:731px;width:4px;height:67px;background:#fff"></div>
<svg class="r" style="left:1648px;top:702px;" width="22" height="32" viewBox="0 0 22 32"><path d="M3 2 L17 16 L3 30" fill="none" stroke="#fff" stroke-width="3.6" stroke-linejoin="miter"/></svg>
<div class="r" style="left:2254px;top:618px;width:4px;height:87px;background:#fff"></div>
<div class="r" style="left:2254px;top:731px;width:4px;height:67px;background:#fff"></div>
<svg class="r" style="left:2248px;top:702px;" width="22" height="32" viewBox="0 0 22 32"><path d="M3 2 L17 16 L3 30" fill="none" stroke="#fff" stroke-width="3.6" stroke-linejoin="miter"/></svg>
<div class="t" style="left:1250.0px;top:630.6px;font-size:24px;color:#fff;font-weight:700;letter-spacing:1.61px;">CONTACT MADE</div>
<div class="t" style="left:1347.1px;top:683.8px;font-size:32px;color:#fff;font-weight:700;text-shadow:1px 1px 1px rgba(0,0,0,.55);">5</div>
<div class="t" style="left:1338.7px;top:728.6px;font-size:24px;color:#fff;font-weight:700;text-shadow:1px 1px 1px rgba(0,0,0,.55);">0%</div>
<div class="t" style="left:1831.8px;top:630.6px;font-size:24px;color:#fff;font-weight:700;letter-spacing:1.30px;">APPOINTMENT SET</div>
<div class="t" style="left:1947.1px;top:683.8px;font-size:32px;color:#fff;font-weight:700;text-shadow:1px 1px 1px rgba(0,0,0,.55);">5</div>
<div class="t" style="left:1925.3px;top:728.6px;font-size:24px;color:#fff;font-weight:700;text-shadow:1px 1px 1px rgba(0,0,0,.55);">100%</div>
<div class="t" style="left:2520.0px;top:630.6px;font-size:24px;color:#fff;font-weight:700;letter-spacing:1.11px;">SOLD</div>
<div class="t" style="left:2547.1px;top:683.8px;font-size:32px;color:#fff;font-weight:700;text-shadow:1px 1px 1px rgba(0,0,0,.55);">5</div>
<div class="t" style="left:2525.3px;top:728.6px;font-size:24px;color:#fff;font-weight:700;text-shadow:1px 1px 1px rgba(0,0,0,.55);">100%</div>
<div class="r" style="left:428px;top:858px;width:585px;height:682px;background:#fff;border-radius:8px;box-shadow:0 2px 5px rgba(0,0,0,.17)"></div>
<div class="r" style="left:1053px;top:858px;width:585px;height:682px;background:#fff;border-radius:8px;box-shadow:0 2px 5px rgba(0,0,0,.17)"></div>
<div class="r" style="left:1678px;top:858px;width:586px;height:682px;background:#fff;border-radius:8px;box-shadow:0 2px 5px rgba(0,0,0,.17)"></div>
<div class="r" style="left:2303px;top:858px;width:585px;height:682px;background:#fff;border-radius:8px;box-shadow:0 2px 5px rgba(0,0,0,.17)"></div>
<div class="r" style="left:444px;top:880px;width:64px;height:64px;background:#a01738;border-radius:50%"></div>
<svg class="r" style="left:459px;top:895px" width="34" height="34" viewBox="0 0 24 24" fill="none" stroke="#fff" stroke-width="2.2" stroke-linecap="round" stroke-linejoin="round"><path d="M3 17l6 -6l4 4l8 -8"/><path d="M14 7l7 0l0 7"/></svg>
<div class="t" style="left:532.6px;top:880.6px;font-size:28px;color:#101c21;letter-spacing:-1.12px;-webkit-text-stroke:0.3px #101c21;">CONTACT ...</div>
<div class="t" style="left:532.6px;top:918.8px;font-size:25.5px;color:#4b5f66;letter-spacing:-0.55px;">(Default Met...</div>
<svg class="r" style="left:870px;top:885px;" width="53" height="53" viewBox="0 0 53 53"><g fill="none" stroke="#4b5f66" stroke-width="2.7" stroke-linecap="round" stroke-linejoin="round"><path d="M10.7 18.9 V10.9 H18.9"/><path d="M10.7 10.9 L24.7 25"/><path d="M25.5 16.7 H38.5 A4 4 0 0 1 42.5 20.7 V38.7 A4 4 0 0 1 38.5 42.7 H20.7 A4 4 0 0 1 16.7 38.7 V25.5"/><path d="M28.6 42.7 V32.6 A4 4 0 0 1 32.6 28.6 H42.5"/></g></svg>
<svg class="r" style="left:947.5999999999999px;top:890.8px" width="42" height="42" viewBox="0 0 24 24" fill="none" stroke="#4b5f66" stroke-width="1.55" stroke-linecap="round" stroke-linejoin="round"><path d="M10.34 3.46A8.7 8.7 0 0 1 13.66 3.46L14.12 5.85A6.5 6.5 0 0 1 16.26 7.09L18.57 6.29A8.7 8.7 0 0 1 20.23 9.17L18.38 10.76A6.5 6.5 0 0 1 18.38 13.24L20.23 14.83A8.7 8.7 0 0 1 18.57 17.71L16.26 16.91A6.5 6.5 0 0 1 14.12 18.15L13.66 20.54A8.7 8.7 0 0 1 10.34 20.54L9.88 18.15A6.5 6.5 0 0 1 7.74 16.91L5.43 17.71A8.7 8.7 0 0 1 3.77 14.83L5.62 13.24A6.5 6.5 0 0 1 5.62 10.76L3.77 9.17A8.7 8.7 0 0 1 5.43 6.29L7.74 7.09A6.5 6.5 0 0 1 9.88 5.85Z"/><path d="M12 12m-3.3 0a3.3 3.3 0 1 0 6.6 0a3.3 3.3 0 1 0 -6.6 0"/></svg>
<div class="r" style="left:448px;top:986px;width:80px;height:80px;background:#cfe3f5;border-radius:8px"></div>
<div class="t" style="left:467.0px;top:1009.2px;font-size:31px;color:#0f2a4a;letter-spacing:-2.06px;-webkit-text-stroke:0.3px #0f2a4a;">DA</div>
<div class="r" style="left:508.5px;top:1006px;width:43.0px;height:43px;background:#b38a1f;border:4px solid #fff;border-radius:50%"></div>
<div class="t" style="left:524.2px;top:1018.1px;font-size:21px;color:#fff;">1</div>
<div class="t" style="left:561.0px;top:990.4px;font-size:29px;color:#5a2a2a;letter-spacing:0.02px;-webkit-text-stroke:0.3px #5a2a2a;">Dallas Admin</div>
<div class="t" style="left:951.9px;top:990.4px;font-size:29px;color:#101c21;-webkit-text-stroke:0.3px #101c21;">3</div>
<div class="r" style="left:561px;top:1032px;width:407px;height:32px;background:#124b5b;border-radius:7px"></div>
<div class="r" style="left:448px;top:1090px;width:80px;height:80px;background:#fde3c0;border-radius:8px"></div>
<div class="t" style="left:468.8px;top:1112.7px;font-size:31px;color:#3b2a10;letter-spacing:-5.86px;-webkit-text-stroke:0.3px #3b2a10;">KR</div>
<div class="r" style="left:508.5px;top:1110px;width:43.0px;height:43px;background:#5e7278;border:4px solid #fff;border-radius:50%"></div>
<div class="t" style="left:524.2px;top:1122.2px;font-size:21px;color:#fff;">2</div>
<div class="t" style="left:561.0px;top:1093.8px;font-size:29px;color:#5a2a2a;letter-spacing:-1.07px;-webkit-text-stroke:0.3px #5a2a2a;">Kyle Rep</div>
<div class="t" style="left:951.9px;top:1093.8px;font-size:29px;color:#101c21;-webkit-text-stroke:0.3px #101c21;">2</div>
<div class="r" style="left:561px;top:1136px;width:407px;height:32px;background:#dfe6e9;border-radius:7px"></div>
<div class="r" style="left:561px;top:1136px;width:269px;height:32px;background:#124b5b;border-radius:7px"></div>
<div class="r" style="left:1069px;top:880px;width:64px;height:64px;background:#a01738;border-radius:50%"></div>
<svg class="r" style="left:1084px;top:895px" width="34" height="34" viewBox="0 0 24 24" fill="none" stroke="#fff" stroke-width="2.2" stroke-linecap="round" stroke-linejoin="round"><path d="M3 17l6 -6l4 4l8 -8"/><path d="M14 7l7 0l0 7"/></svg>
<div class="t" style="left:1157.6px;top:880.6px;font-size:28px;color:#101c21;letter-spacing:-1.12px;-webkit-text-stroke:0.3px #101c21;">CONTACT ...</div>
<div class="t" style="left:1157.6px;top:918.8px;font-size:25.5px;color:#4b5f66;letter-spacing:-0.55px;">(Default Met...</div>
<svg class="r" style="left:1495px;top:885px;" width="53" height="53" viewBox="0 0 53 53"><g fill="none" stroke="#4b5f66" stroke-width="2.7" stroke-linecap="round" stroke-linejoin="round"><path d="M10.7 18.9 V10.9 H18.9"/><path d="M10.7 10.9 L24.7 25"/><path d="M25.5 16.7 H38.5 A4 4 0 0 1 42.5 20.7 V38.7 A4 4 0 0 1 38.5 42.7 H20.7 A4 4 0 0 1 16.7 38.7 V25.5"/><path d="M28.6 42.7 V32.6 A4 4 0 0 1 32.6 28.6 H42.5"/></g></svg>
<svg class="r" style="left:1572.6px;top:890.8px" width="42" height="42" viewBox="0 0 24 24" fill="none" stroke="#4b5f66" stroke-width="1.55" stroke-linecap="round" stroke-linejoin="round"><path d="M10.34 3.46A8.7 8.7 0 0 1 13.66 3.46L14.12 5.85A6.5 6.5 0 0 1 16.26 7.09L18.57 6.29A8.7 8.7 0 0 1 20.23 9.17L18.38 10.76A6.5 6.5 0 0 1 18.38 13.24L20.23 14.83A8.7 8.7 0 0 1 18.57 17.71L16.26 16.91A6.5 6.5 0 0 1 14.12 18.15L13.66 20.54A8.7 8.7 0 0 1 10.34 20.54L9.88 18.15A6.5 6.5 0 0 1 7.74 16.91L5.43 17.71A8.7 8.7 0 0 1 3.77 14.83L5.62 13.24A6.5 6.5 0 0 1 5.62 10.76L3.77 9.17A8.7 8.7 0 0 1 5.43 6.29L7.74 7.09A6.5 6.5 0 0 1 9.88 5.85Z"/><path d="M12 12m-3.3 0a3.3 3.3 0 1 0 6.6 0a3.3 3.3 0 1 0 -6.6 0"/></svg>
<div class="r" style="left:1073px;top:986px;width:80px;height:80px;background:#cfe3f5;border-radius:8px"></div>
<div class="t" style="left:1092.0px;top:1009.2px;font-size:31px;color:#0f2a4a;letter-spacing:-2.06px;-webkit-text-stroke:0.3px #0f2a4a;">DA</div>
<div class="r" style="left:1133.5px;top:1006px;width:43.0px;height:43px;background:#b38a1f;border:4px solid #fff;border-radius:50%"></div>
<div class="t" style="left:1149.2px;top:1018.1px;font-size:21px;color:#fff;">1</div>
<div class="t" style="left:1186.0px;top:990.4px;font-size:29px;color:#5a2a2a;letter-spacing:0.02px;-webkit-text-stroke:0.3px #5a2a2a;">Dallas Admin</div>
<div class="t" style="left:1576.9px;top:990.4px;font-size:29px;color:#101c21;-webkit-text-stroke:0.3px #101c21;">3</div>
<div class="r" style="left:1186px;top:1032px;width:407px;height:32px;background:#124b5b;border-radius:7px"></div>
<div class="r" style="left:1073px;top:1090px;width:80px;height:80px;background:#fde3c0;border-radius:8px"></div>
<div class="t" style="left:1093.8px;top:1112.7px;font-size:31px;color:#3b2a10;letter-spacing:-5.86px;-webkit-text-stroke:0.3px #3b2a10;">KR</div>
<div class="r" style="left:1133.5px;top:1110px;width:43.0px;height:43px;background:#5e7278;border:4px solid #fff;border-radius:50%"></div>
<div class="t" style="left:1149.2px;top:1122.2px;font-size:21px;color:#fff;">2</div>
<div class="t" style="left:1186.0px;top:1093.8px;font-size:29px;color:#5a2a2a;letter-spacing:-1.07px;-webkit-text-stroke:0.3px #5a2a2a;">Kyle Rep</div>
<div class="t" style="left:1576.9px;top:1093.8px;font-size:29px;color:#101c21;-webkit-text-stroke:0.3px #101c21;">2</div>
<div class="r" style="left:1186px;top:1136px;width:407px;height:32px;background:#dfe6e9;border-radius:7px"></div>
<div class="r" style="left:1186px;top:1136px;width:269px;height:32px;background:#124b5b;border-radius:7px"></div>
<div class="r" style="left:1694px;top:880px;width:64px;height:64px;background:#a01738;border-radius:50%"></div>
<svg class="r" style="left:1709px;top:895px" width="34" height="34" viewBox="0 0 24 24" fill="none" stroke="#fff" stroke-width="2.2" stroke-linecap="round" stroke-linejoin="round"><path d="M3 17l6 -6l4 4l8 -8"/><path d="M14 7l7 0l0 7"/></svg>
<div class="t" style="left:1782.6px;top:880.6px;font-size:28px;color:#101c21;letter-spacing:-1.22px;-webkit-text-stroke:0.3px #101c21;">APPOINTM...</div>
<div class="t" style="left:1782.6px;top:918.8px;font-size:25.5px;color:#4b5f66;letter-spacing:-0.51px;">(Default Met...</div>
<svg class="r" style="left:2120px;top:885px;" width="53" height="53" viewBox="0 0 53 53"><g fill="none" stroke="#4b5f66" stroke-width="2.7" stroke-linecap="round" stroke-linejoin="round"><path d="M10.7 18.9 V10.9 H18.9"/><path d="M10.7 10.9 L24.7 25"/><path d="M25.5 16.7 H38.5 A4 4 0 0 1 42.5 20.7 V38.7 A4 4 0 0 1 38.5 42.7 H20.7 A4 4 0 0 1 16.7 38.7 V25.5"/><path d="M28.6 42.7 V32.6 A4 4 0 0 1 32.6 28.6 H42.5"/></g></svg>
<svg class="r" style="left:2197.6px;top:890.8px" width="42" height="42" viewBox="0 0 24 24" fill="none" stroke="#4b5f66" stroke-width="1.55" stroke-linecap="round" stroke-linejoin="round"><path d="M10.34 3.46A8.7 8.7 0 0 1 13.66 3.46L14.12 5.85A6.5 6.5 0 0 1 16.26 7.09L18.57 6.29A8.7 8.7 0 0 1 20.23 9.17L18.38 10.76A6.5 6.5 0 0 1 18.38 13.24L20.23 14.83A8.7 8.7 0 0 1 18.57 17.71L16.26 16.91A6.5 6.5 0 0 1 14.12 18.15L13.66 20.54A8.7 8.7 0 0 1 10.34 20.54L9.88 18.15A6.5 6.5 0 0 1 7.74 16.91L5.43 17.71A8.7 8.7 0 0 1 3.77 14.83L5.62 13.24A6.5 6.5 0 0 1 5.62 10.76L3.77 9.17A8.7 8.7 0 0 1 5.43 6.29L7.74 7.09A6.5 6.5 0 0 1 9.88 5.85Z"/><path d="M12 12m-3.3 0a3.3 3.3 0 1 0 6.6 0a3.3 3.3 0 1 0 -6.6 0"/></svg>
<div class="r" style="left:1698px;top:986px;width:80px;height:80px;background:#cfe3f5;border-radius:8px"></div>
<div class="t" style="left:1717.0px;top:1009.2px;font-size:31px;color:#0f2a4a;letter-spacing:-2.06px;-webkit-text-stroke:0.3px #0f2a4a;">DA</div>
<div class="r" style="left:1758.5px;top:1006px;width:43.0px;height:43px;background:#b38a1f;border:4px solid #fff;border-radius:50%"></div>
<div class="t" style="left:1774.2px;top:1018.1px;font-size:21px;color:#fff;">1</div>
<div class="t" style="left:1811.0px;top:990.4px;font-size:29px;color:#5a2a2a;letter-spacing:0.02px;-webkit-text-stroke:0.3px #5a2a2a;">Dallas Admin</div>
<div class="t" style="left:2201.9px;top:990.4px;font-size:29px;color:#101c21;-webkit-text-stroke:0.3px #101c21;">3</div>
<div class="r" style="left:1811px;top:1032px;width:407px;height:32px;background:#124b5b;border-radius:7px"></div>
<div class="r" style="left:1698px;top:1090px;width:80px;height:80px;background:#fde3c0;border-radius:8px"></div>
<div class="t" style="left:1718.8px;top:1112.7px;font-size:31px;color:#3b2a10;letter-spacing:-5.86px;-webkit-text-stroke:0.3px #3b2a10;">KR</div>
<div class="r" style="left:1758.5px;top:1110px;width:43.0px;height:43px;background:#5e7278;border:4px solid #fff;border-radius:50%"></div>
<div class="t" style="left:1774.2px;top:1122.2px;font-size:21px;color:#fff;">2</div>
<div class="t" style="left:1811.0px;top:1093.8px;font-size:29px;color:#5a2a2a;letter-spacing:-1.07px;-webkit-text-stroke:0.3px #5a2a2a;">Kyle Rep</div>
<div class="t" style="left:2201.9px;top:1093.8px;font-size:29px;color:#101c21;-webkit-text-stroke:0.3px #101c21;">2</div>
<div class="r" style="left:1811px;top:1136px;width:407px;height:32px;background:#dfe6e9;border-radius:7px"></div>
<div class="r" style="left:1811px;top:1136px;width:269px;height:32px;background:#124b5b;border-radius:7px"></div>
<div class="r" style="left:2319px;top:880px;width:64px;height:64px;background:#e0194a;border-radius:50%"></div>
<svg class="r" style="left:2335px;top:896px;" width="32" height="32" viewBox="0 0 32 32"><g fill="#fff"><circle cx="16" cy="7" r="3.2"/><circle cx="7.5" cy="10" r="2.6"/><circle cx="24.5" cy="10" r="2.6"/><path d="M11.5 13.5 H20.5 Q22 13.5 22 15 V23 H10 V15 Q10 13.5 11.5 13.5 Z"/><path d="M3.5 14.5 H8.5 V23 H3 V15 Q3 14.5 3.5 14.5 Z"/><path d="M23.5 14.5 H28.5 Q29 14.5 29 15 V23 H23.5 Z"/></g></svg>
<div class="t" style="left:2407.6px;top:897.6px;font-size:28px;color:#101c21;letter-spacing:-1.26px;-webkit-text-stroke:0.3px #101c21;">APPOINTM...</div>
<svg class="r" style="left:2745px;top:885px;" width="53" height="53" viewBox="0 0 53 53"><g fill="none" stroke="#4b5f66" stroke-width="2.7" stroke-linecap="round" stroke-linejoin="round"><path d="M10.7 18.9 V10.9 H18.9"/><path d="M10.7 10.9 L24.7 25"/><path d="M25.5 16.7 H38.5 A4 4 0 0 1 42.5 20.7 V38.7 A4 4 0 0 1 38.5 42.7 H20.7 A4 4 0 0 1 16.7 38.7 V25.5"/><path d="M28.6 42.7 V32.6 A4 4 0 0 1 32.6 28.6 H42.5"/></g></svg>
<svg class="r" style="left:2822.6px;top:890.8px" width="42" height="42" viewBox="0 0 24 24" fill="none" stroke="#4b5f66" stroke-width="1.55" stroke-linecap="round" stroke-linejoin="round"><path d="M10.34 3.46A8.7 8.7 0 0 1 13.66 3.46L14.12 5.85A6.5 6.5 0 0 1 16.26 7.09L18.57 6.29A8.7 8.7 0 0 1 20.23 9.17L18.38 10.76A6.5 6.5 0 0 1 18.38 13.24L20.23 14.83A8.7 8.7 0 0 1 18.57 17.71L16.26 16.91A6.5 6.5 0 0 1 14.12 18.15L13.66 20.54A8.7 8.7 0 0 1 10.34 20.54L9.88 18.15A6.5 6.5 0 0 1 7.74 16.91L5.43 17.71A8.7 8.7 0 0 1 3.77 14.83L5.62 13.24A6.5 6.5 0 0 1 5.62 10.76L3.77 9.17A8.7 8.7 0 0 1 5.43 6.29L7.74 7.09A6.5 6.5 0 0 1 9.88 5.85Z"/><path d="M12 12m-3.3 0a3.3 3.3 0 1 0 6.6 0a3.3 3.3 0 1 0 -6.6 0"/></svg>
<div class="t" style="left:2482.5px;top:1214.8px;font-size:29px;color:#37474f;-webkit-text-stroke:0.3px #37474f;">No available data</div>
<div class="r" style="left:428px;top:1580px;width:585px;height:140px;background:#fff;border-radius:8px;box-shadow:0 2px 5px rgba(0,0,0,.17)"></div>
<div class="r" style="left:1053px;top:1580px;width:585px;height:140px;background:#fff;border-radius:8px;box-shadow:0 2px 5px rgba(0,0,0,.17)"></div>
<div class="r" style="left:1678px;top:1580px;width:1210px;height:140px;background:#fff;border-radius:8px;box-shadow:0 2px 5px rgba(0,0,0,.17)"></div>
<div class="r" style="left:444px;top:1602px;width:65px;height:65px;background:#e4e8eb;border-radius:50%"></div>
<div class="r" style="left:532px;top:1602px;width:119px;height:31px;background:#ebedef;border-radius:6px"></div>
<div class="r" style="left:532px;top:1642px;width:177px;height:28px;background:#ebedef;border-radius:6px"></div>
<div class="r" style="left:885px;top:1612px;width:44px;height:48px;background:#ebedef;border-radius:6px"></div>
<div class="r" style="left:953px;top:1612px;width:44px;height:48px;background:#ebedef;border-radius:6px"></div>
<div class="r" style="left:1069px;top:1602px;width:65px;height:65px;background:#e4e8eb;border-radius:50%"></div>
<div class="r" style="left:1157px;top:1602px;width:119px;height:31px;background:#ebedef;border-radius:6px"></div>
<div class="r" style="left:1157px;top:1642px;width:177px;height:28px;background:#ebedef;border-radius:6px"></div>
<div class="r" style="left:1510px;top:1612px;width:44px;height:48px;background:#ebedef;border-radius:6px"></div>
<div class="r" style="left:1578px;top:1612px;width:44px;height:48px;background:#ebedef;border-radius:6px"></div>
<div class="r" style="left:1694px;top:1602px;width:65px;height:65px;background:#e4e8eb;border-radius:50%"></div>
<div class="r" style="left:1782px;top:1602px;width:326px;height:31px;background:#ebedef;border-radius:6px"></div>
<div class="r" style="left:1782px;top:1642px;width:488px;height:28px;background:#ebedef;border-radius:6px"></div>
<div class="r" style="left:2760px;top:1612px;width:44px;height:48px;background:#ebedef;border-radius:6px"></div>
<div class="r" style="left:2828px;top:1612px;width:44px;height:48px;background:#ebedef;border-radius:6px"></div>
<div class="r" style="left:396px;top:496px;width:612px;height:1142px;background:#fff;border-radius:8px;box-shadow:0 6px 28px rgba(0,0,0,.16),0 0 6px rgba(0,0,0,.05)"></div>
<svg class="r" style="left:384px;top:1577px;" width="14" height="26" viewBox="0 0 14 26"><path d="M13 0 L1 13 L13 26 Z" fill="#fff"/></svg>
<div class="t" style="left:436.6px;top:541.5px;font-size:28px;color:#101c21;letter-spacing:1.46px;-webkit-text-stroke:0.9px #101c21;">Gamification</div>
<div class="r" style="left:412px;top:584px;width:580px;height:2px;background:#dfe6e9"></div>
<div class="t" style="left:436.7px;top:839.0px;font-size:28px;color:#101c21;letter-spacing:1.41px;-webkit-text-stroke:0.9px #101c21;">Company</div>
<div class="r" style="left:412px;top:882px;width:580px;height:2px;background:#dfe6e9"></div>
<div class="t" style="left:436.7px;top:1426.2px;font-size:28px;color:#101c21;letter-spacing:1.49px;-webkit-text-stroke:0.9px #101c21;">Settings</div>
<div class="r" style="left:412px;top:1468px;width:580px;height:2px;background:#dfe6e9"></div>
<svg class="r" style="left:435.5px;top:609px" width="42" height="42" viewBox="0 0 24 24" fill="none" stroke="#4b5f66" stroke-width="1.5" stroke-linecap="round" stroke-linejoin="round"><path d="M4 3.5L20.5 20"/><path d="M20 3.5L3.5 20"/><path d="M3.5 16l4.5 4.5"/><path d="M16 20.5l4.5 -4.5"/></svg>
<div class="t" style="left:501.3px;top:614.8px;font-size:28px;color:#101c21;letter-spacing:0.18px;-webkit-text-stroke:0.2px #101c21;">Battles</div>
<svg class="r" style="left:435.5px;top:681px" width="42" height="42" viewBox="0 0 24 24" fill="none" stroke="#4b5f66" stroke-width="1.5" stroke-linecap="round" stroke-linejoin="round"><path d="M4 5h2"/><path d="M5 4v2"/><path d="M11.5 4l-.5 2"/><path d="M18 5h2"/><path d="M19 4v2"/><path d="M15 9l-1 1"/><path d="M18 13l2 -.5"/><path d="M18 19h2"/><path d="M19 18v2"/><path d="M14 16.518l-6.518 -6.518l-4.39 9.58a1 1 0 0 0 1.329 1.329l9.579 -4.39z"/></svg>
<div class="t" style="left:501.3px;top:686.8px;font-size:28px;color:#101c21;letter-spacing:0.44px;-webkit-text-stroke:0.2px #101c21;">Achievements</div>
<svg class="r" style="left:430.7px;top:748px;" width="55" height="50" viewBox="0 0 55 50"><g fill="none" stroke="#4b5f66" stroke-width="2.5" stroke-linecap="round" stroke-linejoin="round"><path d="M17.25 19.95 H33.55 A8 8 0 0 1 41.55 27.95 V35.5 A6.25 6.25 0 0 1 35.3 41.75 C33 41.75 31.7 40.5 30.5 38.7 L29.6 37.4 A2.5 2.5 0 0 0 27.5 36.3 H23.2 A2.5 2.5 0 0 0 21.1 37.4 L20.2 38.7 C19 40.5 17.7 41.75 15.5 41.75 A6.25 6.25 0 0 1 9.25 35.5 V27.95 A8 8 0 0 1 17.25 19.95 Z"/><path d="M25.5 19.95 V12.8 A2.85 2.85 0 0 1 31.2 12.8 V13.6"/></g><g fill="#4b5f66"><circle cx="17.2" cy="30" r="1.9"/><circle cx="33.3" cy="30" r="1.9"/></g></svg>
<div class="t" style="left:501.3px;top:758.8px;font-size:28px;color:#101c21;letter-spacing:-0.68px;-webkit-text-stroke:0.2px #101c21;">XP &amp; Levels</div>
<svg class="r" style="left:435.5px;top:907px" width="42" height="42" viewBox="0 0 24 24" fill="none" stroke="#4b5f66" stroke-width="1.5" stroke-linecap="round" stroke-linejoin="round"><path d="M11.7 6.5m-3.1 0a3.1 3.1 0 1 0 6.2 0a3.1 3.1 0 1 0 -6.2 0"/><path d="M4.7 21V18.8a5.5 5.5 0 0 1 5.5 -5.5h3a5.5 5.5 0 0 1 5.5 5.5V21z"/></svg>
<div class="t" style="left:501.3px;top:912.9px;font-size:28px;color:#101c21;letter-spacing:-0.78px;-webkit-text-stroke:0.2px #101c21;">Users</div>
<svg class="r" style="left:429.3px;top:974.6px;" width="55" height="50" viewBox="0 0 55 50"><g fill="none" stroke="#4b5f66" stroke-width="2.5" stroke-linejoin="round"><path d="M12.5 41.9 H41.2 A1.9 1.9 0 0 0 43.1 40 V26.9 A5 5 0 0 0 38.1 21.9 H26.9 V14.75 A5 5 0 0 0 21.9 9.75 H15.65 A5 5 0 0 0 10.65 14.75 V40 A1.9 1.9 0 0 0 12.5 41.9 Z"/><path d="M26.9 21.9 V41.9"/></g><g fill="#4b5f66"><circle cx="19" cy="17.9" r="1.9"/><circle cx="19" cy="25.9" r="1.9"/><circle cx="35" cy="30" r="1.9"/></g></svg>
<div class="t" style="left:501.3px;top:984.9px;font-size:28px;color:#101c21;letter-spacing:0.42px;-webkit-text-stroke:0.2px #101c21;">Organization</div>
<svg class="r" style="left:435.5px;top:1051px" width="42" height="42" viewBox="0 0 24 24" fill="none" stroke="#4b5f66" stroke-width="1.5" stroke-linecap="round" stroke-linejoin="round"><path d="M11.7 3l-5.5 5.9h11z"/><path d="M2.5 14.7h6.8v6.3h-6.8z"/><path d="M17.6 17.8m-3.6 0a3.6 3.6 0 1 0 7.2 0a3.6 3.6 0 1 0 -7.2 0"/></svg>
<div class="t" style="left:501.3px;top:1057.0px;font-size:28px;color:#101c21;letter-spacing:0.77px;-webkit-text-stroke:0.2px #101c21;">Activity Types</div>
<svg class="r" style="left:435.5px;top:1123px" width="42" height="42" viewBox="0 0 24 24" fill="none" stroke="#4b5f66" stroke-width="1.5" stroke-linecap="round" stroke-linejoin="round"><path d="M3 5a2 2 0 0 1 2 -2h14a2 2 0 0 1 2 2v14a2 2 0 0 1 -2 2h-14a2 2 0 0 1 -2 -2z"/><path d="M12 8.5v7"/><path d="M9 10.25l6 3.5"/><path d="M15 10.25l-6 3.5"/></svg>
<div class="t" style="left:501.3px;top:1129.0px;font-size:28px;color:#101c21;letter-spacing:0.71px;-webkit-text-stroke:0.2px #101c21;">Metrics</div>
<svg class="r" style="left:435.5px;top:1195px" width="42" height="42" viewBox="0 0 24 24" fill="none" stroke="#4b5f66" stroke-width="1.5" stroke-linecap="round" stroke-linejoin="round"><path d="M3 11a2 2 0 0 1 2 -2h7a2 2 0 0 1 2 2v7a2 2 0 0 1 -2 2h-7a2 2 0 0 1 -2 -2z"/><path d="M8 14v-8a2 2 0 0 1 2 -2h9a2 2 0 0 1 2 2v7a2 2 0 0 1 -2 2h-9a2 2 0 0 1 -2 -2"/></svg>
<div class="t" style="left:501.3px;top:1201.0px;font-size:28px;color:#101c21;letter-spacing:0.49px;-webkit-text-stroke:0.2px #101c21;">Activity Flows</div>
<svg class="r" style="left:435.5px;top:1267px" width="42" height="42" viewBox="0 0 24 24" fill="none" stroke="#4b5f66" stroke-width="1.5" stroke-linecap="round" stroke-linejoin="round"><path d="M3 5a2 2 0 0 1 2 -2h14a2 2 0 0 1 2 2v9a2 2 0 0 1 -2 2h-14a2 2 0 0 1 -2 -2z"/><path d="M10 20h4"/></svg>
<div class="t" style="left:501.3px;top:1273.0px;font-size:28px;color:#101c21;letter-spacing:-0.32px;-webkit-text-stroke:0.2px #101c21;">Screens</div>
<svg class="r" style="left:435.5px;top:1339px" width="42" height="42" viewBox="0 0 24 24" fill="none" stroke="#4b5f66" stroke-width="1.5" stroke-linecap="round" stroke-linejoin="round"><path d="M5 19v-6a1 1 0 0 1 1 -1h3v7"/><path d="M9 19v-4h4v4"/><path d="M13 19v-12a1 1 0 0 1 1 -1h3a1 1 0 0 1 1 1v12z"/><path d="M5 19h13"/><path d="M5 21.5h13"/></svg>
<div class="t" style="left:501.3px;top:1345.0px;font-size:28px;color:#101c21;letter-spacing:0.48px;-webkit-text-stroke:0.2px #101c21;">Insights</div>
<svg class="r" style="left:435.5px;top:1493px" width="42" height="42" viewBox="0 0 24 24" fill="none" stroke="#4b5f66" stroke-width="1.5" stroke-linecap="round" stroke-linejoin="round"><path d="M12 3c2.5 1.5 3.5 4.5 3.5 7.5l2.5 3a2 2 0 0 1 .5 1.3v3.7a1 1 0 0 1 -1.7 .7l-2.3 -2.2l-2.5 2.5l-2.5 -2.5l-2.3 2.2a1 1 0 0 1 -1.7 -.7v-3.7a2 2 0 0 1 .5 -1.3l2.5 -3c0 -3 1 -6 3.5 -7.5z"/><path d="M12 8l.01 0"/></svg>
<div class="t" style="left:501.3px;top:1499.1px;font-size:28px;color:#101c21;letter-spacing:0.67px;-webkit-text-stroke:0.2px #101c21;">Integrations</div>
<svg class="r" style="left:435.5px;top:1565px" width="42" height="42" viewBox="0 0 24 24" fill="none" stroke="#4b5f66" stroke-width="1.5" stroke-linecap="round" stroke-linejoin="round"><path d="M10.34 3.46A8.7 8.7 0 0 1 13.66 3.46L14.12 5.85A6.5 6.5 0 0 1 16.26 7.09L18.57 6.29A8.7 8.7 0 0 1 20.23 9.17L18.38 10.76A6.5 6.5 0 0 1 18.38 13.24L20.23 14.83A8.7 8.7 0 0 1 18.57 17.71L16.26 16.91A6.5 6.5 0 0 1 14.12 18.15L13.66 20.54A8.7 8.7 0 0 1 10.34 20.54L9.88 18.15A6.5 6.5 0 0 1 7.74 16.91L5.43 17.71A8.7 8.7 0 0 1 3.77 14.83L5.62 13.24A6.5 6.5 0 0 1 5.62 10.76L3.77 9.17A8.7 8.7 0 0 1 5.43 6.29L7.74 7.09A6.5 6.5 0 0 1 9.88 5.85Z"/><path d="M12 12m-3.3 0a3.3 3.3 0 1 0 6.6 0a3.3 3.3 0 1 0 -6.6 0"/></svg>
<div class="t" style="left:501.3px;top:1571.2px;font-size:28px;color:#101c21;letter-spacing:0.64px;-webkit-text-stroke:0.2px #101c21;">Settings</div>
<div class="r" style="left:398px;top:880px;width:232px;height:96px;border:14px solid #ff2a04;border-radius:48px"></div>
<div class="r" style="left:11px;top:1546px;width:355px;height:95px;border:14px solid #ff2a04;border-radius:48px"></div>
<svg class="r" style="left:0px;top:0px;pointer-events:none;filter:drop-shadow(0.5px 1px 0.8px rgba(0,0,0,.3))" width="700" height="1654" viewBox="0 0 700 1654"><path d="M236.5 1529 L286.6 1348 L345.4 1150 L359 1100 L374.2 1044.2 L349 1043.7 L414.6 976.4 L429.1 1069 L409.6 1055.8 L392 1100 L373.8 1150 L302 1348 L243.5 1532 Z" fill="#ff2a04"/><circle cx="240" cy="1530.5" r="3.8" fill="#ff2a04"/></svg>
</body></html>
